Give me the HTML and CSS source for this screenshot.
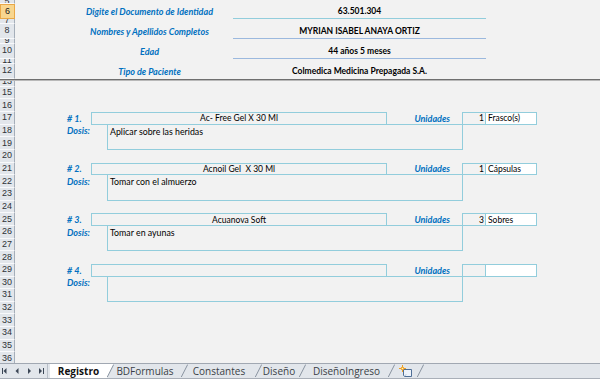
FILE: index.html
```html
<!DOCTYPE html>
<html lang="es">
<head>
<meta charset="utf-8">
<title>Registro</title>
<link rel="stylesheet" href="styles.css">
</head>
<body>
<div class="app">
  <div class="sheet">
    <div class="pane pane-top">
      <div class="rowheads">
        <div class="rh h35">5</div>
        <div class="rh h15 rh-active">6</div>
        <div class="rh h5">7</div>
        <div class="rh h15">8</div>
        <div class="rh h5">9</div>
        <div class="rh h15">10</div>
        <div class="rh h5">11</div>
        <div class="rh h15">12</div>
      </div>
      <div class="top">
        <div class="field">
          <div class="label">Digite el Documento de Identidad</div>
          <div class="value cyan">63.501.304</div>
        </div>
        <div class="field">
          <div class="label">Nombres y Apellidos Completos</div>
          <div class="value">MYRIAN ISABEL ANAYA ORTIZ</div>
        </div>
        <div class="field">
          <div class="label">Edad</div>
          <div class="value">44 años 5 meses</div>
        </div>
        <div class="field">
          <div class="label">Tipo de Paciente</div>
          <div class="value plain">Colmedica Medicina Prepagada S.A.</div>
        </div>
      </div>
    </div>
    <div class="freeze"></div>
    <div class="pane pane-bottom">
      <div class="rowheads">
        <div class="rh h6 rh-cut">13</div>
        <div class="rh">15</div>
        <div class="rh">16</div>
        <div class="rh">17</div>
        <div class="rh">18</div>
        <div class="rh">19</div>
        <div class="rh">20</div>
        <div class="rh">21</div>
        <div class="rh">22</div>
        <div class="rh">23</div>
        <div class="rh">24</div>
        <div class="rh">25</div>
        <div class="rh">26</div>
        <div class="rh">27</div>
        <div class="rh">28</div>
        <div class="rh">29</div>
        <div class="rh">30</div>
        <div class="rh">31</div>
        <div class="rh">32</div>
        <div class="rh">33</div>
        <div class="rh">34</div>
        <div class="rh">35</div>
        <div class="rh">36</div>
      </div>
      <div class="bottom">
        <div class="med">
          <div class="lbl num"># 1.</div>
          <div class="name">Ac- Free Gel X 30 Ml</div>
          <div class="lbl units">Unidades</div>
          <div class="qty">1</div>
          <div class="unit">Frasco(s)</div>
          <div class="lbl dlabel">Dosis:</div>
          <div class="dosis">Aplicar sobre las heridas</div>
        </div>
        <div class="med">
          <div class="lbl num"># 2.</div>
          <div class="name">Acnoil Gel&nbsp; X 30 Ml</div>
          <div class="lbl units">Unidades</div>
          <div class="qty">1</div>
          <div class="unit">Cápsulas</div>
          <div class="lbl dlabel">Dosis:</div>
          <div class="dosis">Tomar con el almuerzo</div>
        </div>
        <div class="med">
          <div class="lbl num"># 3.</div>
          <div class="name">Acuanova Soft</div>
          <div class="lbl units">Unidades</div>
          <div class="qty">3</div>
          <div class="unit">Sobres</div>
          <div class="lbl dlabel">Dosis:</div>
          <div class="dosis">Tomar en ayunas</div>
        </div>
        <div class="med">
          <div class="lbl num"># 4.</div>
          <div class="name"></div>
          <div class="lbl units">Unidades</div>
          <div class="qty"></div>
          <div class="unit"></div>
          <div class="lbl dlabel">Dosis:</div>
          <div class="dosis"></div>
        </div>
      </div>
    </div>
  </div>
  <div class="tabbar">
    <div class="nav">
      <svg width="47" height="14" viewBox="0 0 47 14">
        <g fill="#3c4756">
          <rect x="2" y="4" width="1" height="6"/>
          <polygon points="6.5,4 6.5,10 3.5,7"/>
          <polygon points="18.5,4 18.5,10 15.5,7"/>
          <polygon points="28,4 28,10 31,7"/>
          <polygon points="39,4 39,10 42,7"/>
          <rect x="43" y="4" width="1" height="6"/>
        </g>
      </svg>
    </div>
    <div class="gap2"></div>
    <div class="tab active t-reg">Registro</div>
    <svg class="sep" width="7" height="14" viewBox="0 0 7 14"><polygon points="0,0 6.8,0 0.2,13 0,13" fill="#fff"/><path d="M0.3 13 L6.7 0.5" stroke="#8a94a1" fill="none"/></svg>
    <div class="tab t-bdf">BDFormulas</div>
    <svg class="sep" width="7" height="14" viewBox="0 0 7 14"><path d="M0.3 13 L6.7 0.5" stroke="#8a94a1" fill="none"/></svg>
    <div class="tab t-con">Constantes</div>
    <svg class="sep" width="7" height="14" viewBox="0 0 7 14"><path d="M0.3 13 L6.7 0.5" stroke="#8a94a1" fill="none"/></svg>
    <div class="tab t-dis">Diseño</div>
    <svg class="sep" width="7" height="14" viewBox="0 0 7 14"><path d="M0.3 13 L6.7 0.5" stroke="#8a94a1" fill="none"/></svg>
    <div class="tab t-din">DiseñoIngreso</div>
    <svg class="sep" width="7" height="14" viewBox="0 0 7 14"><path d="M0.3 13 L6.7 0.5" stroke="#8a94a1" fill="none"/></svg>
    <div class="tab t-ins">
      <svg width="14" height="13" viewBox="0 0 14 13">
        <path d="M4.5 4.5 H12.5 V11.5 H5.5 L4.5 10.5 Z" fill="#eef3fa" stroke="#4f6f97"/>
        <path d="M5.5 11 L7 9.5" stroke="#9bb0c8"/>
        <g fill="#f0a020">
          <circle cx="3.5" cy="3.5" r="1.8"/>
          <rect x="3" y="0" width="1" height="7"/>
          <rect x="0" y="3" width="7" height="1"/>
        </g>
        <circle cx="3.5" cy="3.5" r="0.8" fill="#fff3c0"/>
      </svg>
    </div>
    <svg class="sep" width="7" height="14" viewBox="0 0 7 14"><path d="M0.3 13 L6.7 0.5" stroke="#8a94a1" fill="none"/></svg>
    <div class="tabfill"></div>
  </div>
</div>
</body>
</html>
```

FILE: styles.css
```css
* {
  box-sizing: border-box;
  margin: 0;
  padding: 0;
}

html, body {
  width: 600px;
  height: 379px;
  overflow: hidden;
}

body {
  background: #f2f2f2;
  font-family: Lato, "Liberation Sans", sans-serif;
  color: #000;
}

.app {
  display: flex;
  flex-direction: column;
  height: 379px;
}

.sheet {
  height: 363px;
  display: flex;
  flex-direction: column;
  overflow: hidden;
  flex: none;
}

.pane {
  display: flex;
}

.pane-top {
  height: 78.5px;
  flex: none;
}

.pane-bottom {
  flex: 1;
  overflow: hidden;
}

.freeze {
  height: 2px;
  flex: none;
  border-top: 1px solid #6f6f6f;
  background: #b9b9b9;
}

/* row headers */
.rowheads {
  width: 15px;
  flex: none;
  display: flex;
  flex-direction: column;
}

.rh {
  height: 12.67px;
  flex: none;
  background: #e2e6eb;
  border-right: 1px solid #a5aeb9;
  border-bottom: 1px solid #f8f9fb;
  font-family: "Liberation Sans", Arial, sans-serif;
  font-size: 9px;
  line-height: 9px;
  color: #2f3338;
  display: flex;
  align-items: center;
  justify-content: center;
  overflow: hidden;
}

.h35 { height: 3.5px; }
.h15 { height: 15px; }
.h5 { height: 5px; }
.h6 { height: 6.16px; }

.rh-cut {
  align-items: flex-end;
}

.rh-active {
  background: #f8d68f;
  border: 1px solid #e9a847;
  color: #222;
}

/* top frozen area */
.top {
  flex: 1;
  display: flex;
  flex-direction: column;
  gap: 5px;
  padding-top: 3.5px;
}

.field {
  height: 15px;
  flex: none;
  display: grid;
  grid-template-columns: 51px 167px 253px 1fr;
}

.field .label {
  grid-column: 2;
  display: flex;
  align-items: center;
  justify-content: center;
  color: #0070c0;
  font-weight: 700;
  font-style: italic;
  font-size: 9px;
  white-space: nowrap;
}

.field .value {
  grid-column: 3;
  display: flex;
  align-items: center;
  justify-content: center;
  font-weight: 700;
  font-size: 8.5px;
  border-bottom: 1px solid #9cb9de;
  white-space: nowrap;
}

.field .value.cyan {
  border-bottom-color: #92cddc;
}

.field .value.plain {
  border-bottom: none;
}

/* medication blocks */
.bottom {
  flex: 1;
  display: flex;
  flex-direction: column;
  padding-top: 31.5px;
}

.med {
  display: grid;
  grid-template-columns: 51px 25px 16px 280px 75px 24px 51px 1fr;
  grid-template-rows: repeat(4, 12.67px);
  font-size: 8.5px;
  flex: none;
}

.med > div {
  white-space: nowrap;
  overflow: hidden;
}

.lbl {
  color: #0070c0;
  font-weight: 700;
  font-style: italic;
  font-size: 9px;
  display: flex;
  align-items: center;
  padding-left: 1px;
}

.num {
  grid-column: 2;
  grid-row: 1;
}

.dlabel {
  grid-column: 2;
  grid-row: 2;
}

.units {
  grid-column: 5;
  grid-row: 1;
  justify-content: flex-end;
  padding-right: 12px;
}

.name {
  grid-column: 3 / 5;
  grid-row: 1;
  border: 1px solid #92cddc;
  display: flex;
  align-items: center;
  justify-content: center;
}

.qty {
  grid-column: 6;
  grid-row: 1;
  border: 1px solid #92cddc;
  display: flex;
  align-items: center;
  justify-content: flex-end;
  padding-right: 1px;
}

.unit {
  grid-column: 7;
  grid-row: 1;
  border: 1px solid #92cddc;
  margin-left: -1px;
  background: #fff;
  display: flex;
  align-items: center;
  padding-left: 2px;
}

.dosis {
  grid-column: 4 / 6;
  grid-row: 2 / 4;
  border: 1px solid #92cddc;
  margin-top: -1px;
  margin-right: -1px;
  padding: 1px 2px 0;
  line-height: 12px;
  font-size: 8.8px;
}

/* sheet tabs */
.tabbar {
  height: 16px;
  flex: none;
  display: flex;
  align-items: stretch;
  background: #e2e6eb;
  border-top: 1px solid #a1a8b2;
  border-bottom: 1px solid #a9afb8;
}

.nav {
  width: 48px;
  flex: none;
  border-right: 1px solid #b8bfc8;
  display: flex;
  align-items: center;
}

.gap2 {
  width: 2px;
  flex: none;
}

.tab {
  flex: none;
  display: flex;
  align-items: center;
  justify-content: center;
  font-family: "Open Sans", "DejaVu Sans", sans-serif;
  font-size: 10px;
  color: #3a3f46;
  white-space: nowrap;
  padding-right: 5px;
}

.tab.active {
  background: #fff;
  font-weight: 700;
  color: #111;
  padding-right: 0;
}

.t-reg { width: 57px; }
.t-bdf { width: 67px; }
.t-con { width: 67px; }
.t-dis { width: 37px; padding-right: 3px; }
.t-din { width: 82px; padding-right: 1px; }
.t-ins { width: 22px; padding-right: 0; }

.sep {
  flex: none;
  display: block;
}

.tabfill {
  flex: 1;
}
```
